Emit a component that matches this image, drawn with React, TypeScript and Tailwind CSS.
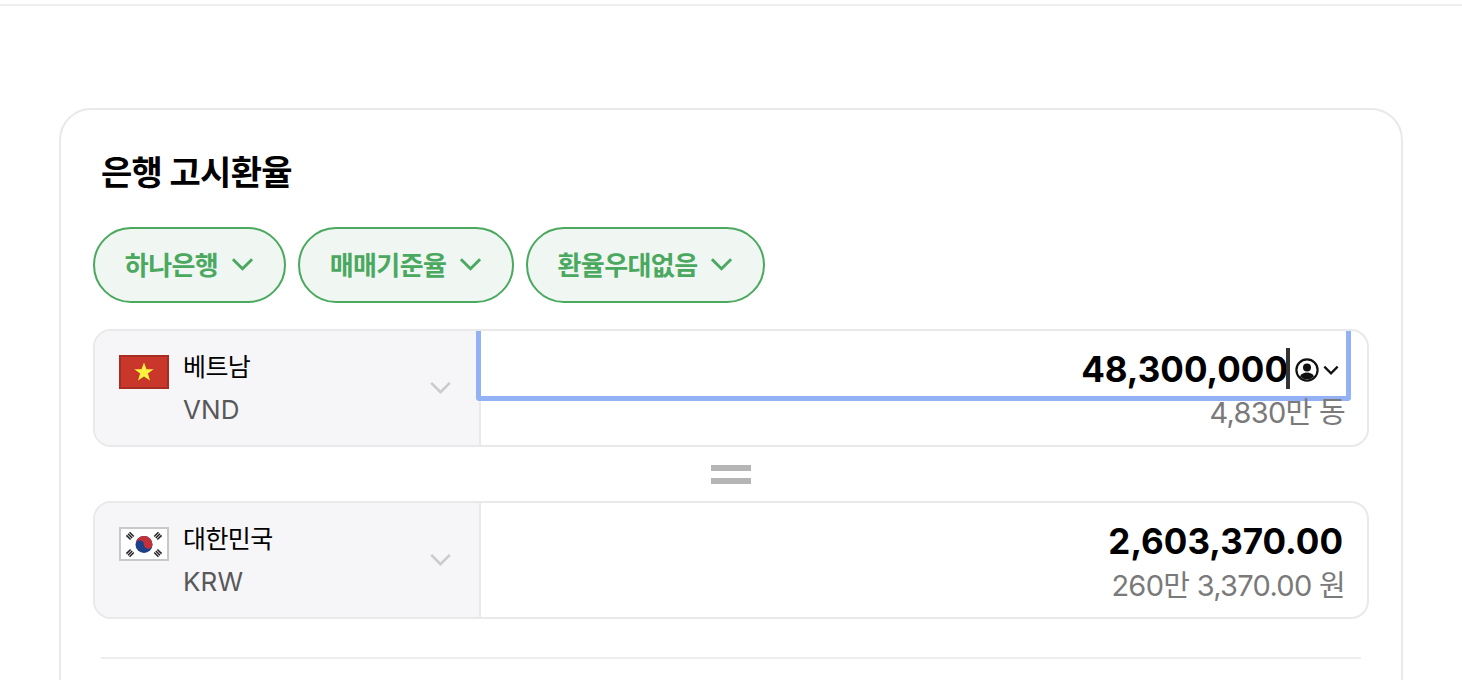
const FONT = "font-['Inter','Noto_Sans_CJK_KR',sans-serif]";

const Chevron = ({ className, weight = 2.8 }: { className: string; weight?: number }) => (
  <svg viewBox="0 0 24 14" fill="none" stroke="currentColor" strokeWidth={weight} className={className}>
    <path d="M2 2l10 10L22 2" />
  </svg>
);

const VietnamFlag = () => (
  <svg viewBox="0 0 50 34" className="w-[50px] h-[34px] shrink-0">
    <rect width="50" height="34" fill="#c8372a" />
    <rect x="1" y="1" width="48" height="32" fill="none" stroke="#a52d24" strokeWidth="2" />
    <polygon points="25,7.5 27.5,14.3 34.6,14.3 28.9,18.6 31,25.6 25,21.4 19,25.6 21.1,18.6 15.4,14.3 22.5,14.3" fill="#fcf33e" />
  </svg>
);

const KoreaFlag = () => (
  <svg viewBox="0 0 50 34" className="w-[50px] h-[34px] shrink-0">
    <rect width="50" height="34" fill="#fff" />
    <rect x="1" y="1" width="48" height="32" fill="none" stroke="#c9c9c9" strokeWidth="2" />
    <circle cx="25" cy="17.5" r="8.5" fill="#1d4189" />
    <path d="M16.5 17.5a8.5 8.5 0 0 1 17 0a4.25 4.25 0 0 1-8.5 0a4.25 4.25 0 0 0-8.5 0z" fill="#c2303a" />
    <g stroke="#222" strokeWidth="6" strokeDasharray="1.5 .7">
      <path d="M9 11l4.6-4.6M41 11l-4.6-4.6M9 24l4.6 4.6M41 24l-4.6 4.6" />
    </g>
  </svg>
);

const UserGlyph = () => (
  <svg viewBox="0 0 24 24" className="w-6 h-6 shrink-0" fill="none">
    <circle cx="12" cy="12" r="10.6" stroke="#111" strokeWidth="2.2" />
    <circle cx="12" cy="9.5" r="4" fill="#111" />
    <path d="M5 18.5c1.4-3 4-4 7-4s5.6 1 7 4a10 10 0 0 1-14 0z" fill="#111" />
  </svg>
);

const Chip = ({ label, width }: { label: string; width: string }) => (
  <button className={`${width} h-[76px] flex items-center justify-center gap-[13px] rounded-full border-2 border-[#4aa85f] bg-[#f0f6f2] text-[#4aa85f] text-[26px] font-bold tracking-[-0.6px]`}>
    {label}
    <Chevron className="w-[23px] h-[14px] -mt-[2px]" weight={3} />
  </button>
);

interface RowProps {
  flag: React.ReactNode;
  country: string;
  code: string;
  sub: string;
  children: React.ReactNode;
}

const CurrencyRow = ({ flag, country, code, sub, children }: RowProps) => (
  <div className="flex h-[118px] rounded-[18px] border-2 border-[#e9e9e9] overflow-hidden">
    <div className="w-[386px] shrink-0 flex items-start bg-[#f6f6f8] border-r-2 border-[#e9e9e9] pl-6 pr-[27px]">
      <div className="mt-[24px]">{flag}</div>
      <div className="ml-[14px] mt-[20px] flex-1">
        <div className="text-[25px] leading-[32px] text-black tracking-[-0.6px]">{country}</div>
        <div className="mt-[11px] text-[26px] leading-[32px] text-[#58585a] tracking-[0.1px]">{code}</div>
      </div>
      <Chevron className="w-[23px] h-[13px] mt-[50px] text-[#cbcbcb]" />
    </div>
    <div className="flex-1 min-w-0 flex flex-col">
      {children}
      <div className="pr-[22px] text-right text-[29px] leading-[36px] text-[#7a7a7a] tracking-[-0.7px]">{sub}</div>
    </div>
  </div>
);

const App = () => {
  return (
    <div className={`${FONT} h-[680px] overflow-hidden bg-white`}>
      <div className="h-[6px] border-b-2 border-[#eeeeee]" />
      <main className="px-[59px] pt-[102px]">
        <section className="h-[700px] rounded-t-[32px] border-2 border-[#e9e9e9] px-[32px]">
          <h2 className="ml-[8px] mt-[42px] text-[34px] leading-[42px] font-bold text-black tracking-[-0.7px]">은행 고시환율</h2>
          <div className="mt-[33px] flex gap-3">
            <Chip label="하나은행" width="w-[193px]" />
            <Chip label="매매기준율" width="w-[216px]" />
            <Chip label="환율우대없음" width="w-[239px]" />
          </div>
          <div className="mt-[26px]">
            <CurrencyRow flag={<VietnamFlag />} country="베트남" code="VND" sub="4,830만 동">
              <div className="-ml-[5px] mr-[16px] h-[70px] mb-[-6px] shrink-0 flex items-center justify-end border-x-[5px] border-b-[5px] border-[#93b2f5] rounded-b-[4px] pr-[7px] pt-[12px]">
                <span className="text-[35px] font-bold text-black leading-none">48,300,000</span>
                <span className="w-[4px] h-[41px] bg-[#333] -ml-[2px] mr-[5px] -mt-[2px]" />
                <UserGlyph />
                <Chevron className="w-[16px] h-[10px] ml-[4px] text-[#111]" weight={3.4} />
              </div>
            </CurrencyRow>
            <div className="h-[54px] flex flex-col items-center justify-center gap-[7px]">
              <div className="w-10 h-[6px] bg-[#b5b5b5]" />
              <div className="w-10 h-[6px] bg-[#b5b5b5]" />
            </div>
            <CurrencyRow flag={<KoreaFlag />} country="대한민국" code="KRW" sub="260만 3,370.00 원">
              <div className="h-[65px] shrink-0 flex items-center justify-end pr-[24px] pt-[12px]">
                <span className="text-[35px] font-bold text-black leading-none">2,603,370.00</span>
              </div>
            </CurrencyRow>
          </div>
          <div className="mt-[38px] mx-[8px] h-[2px] bg-[#eeeeee]" />
        </section>
      </main>
    </div>
  );
};

export default App;
